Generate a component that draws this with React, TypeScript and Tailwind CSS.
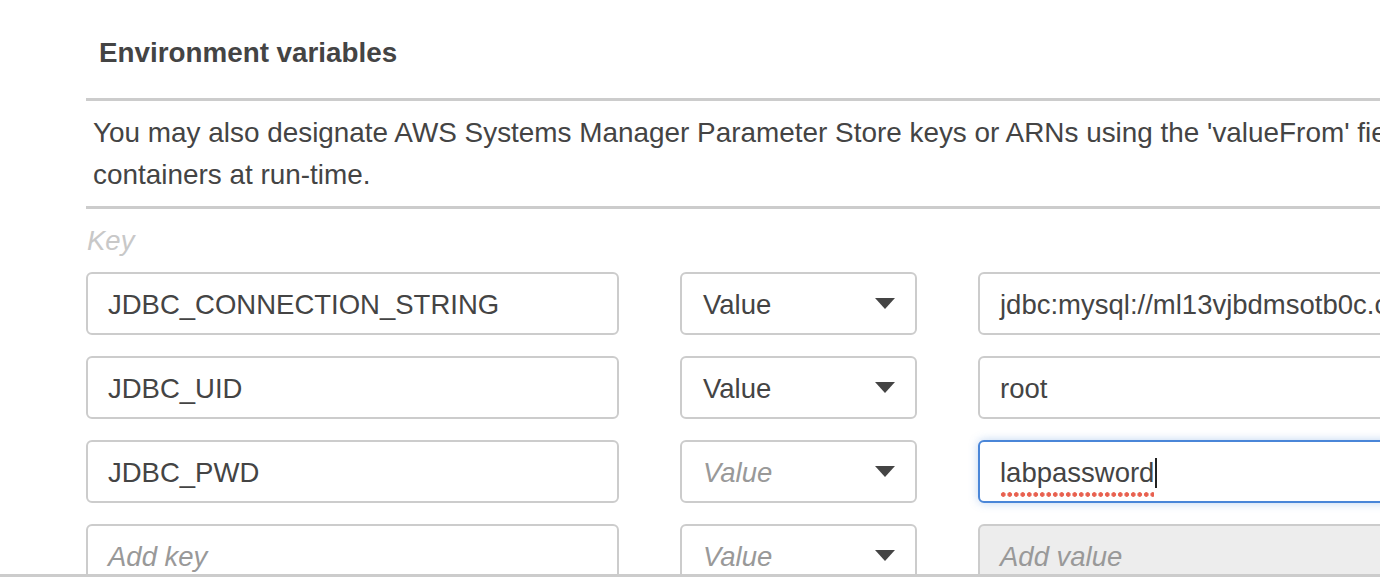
import React from "react";

const Caret = () => (
  <svg width="20" height="11" viewBox="0 0 20 11" className="shrink-0">
    <polygon points="0,0 20,0 10,11" fill="#444" />
  </svg>
);

type Row = {
  key: string;
  keyPlaceholder?: boolean;
  sel: string;
  selPlaceholder?: boolean;
  value: string;
  valuePlaceholder?: boolean;
  focused?: boolean;
};

const rows: Row[] = [
  { key: "JDBC_CONNECTION_STRING", sel: "Value", value: "jdbc:mysql://ml13vjbdmsotb0c.cxk2yqzmsyvk.us-west-2.rds.amazonaws.com" },
  { key: "JDBC_UID", sel: "Value", value: "root" },
  { key: "JDBC_PWD", sel: "Value", selPlaceholder: true, value: "labpassword", focused: true },
  { key: "Add key", keyPlaceholder: true, sel: "Value", selPlaceholder: true, value: "Add value", valuePlaceholder: true },
];

export default function App() {
  return (
    <div
      className="w-[1380px] h-[578px] overflow-hidden bg-white flex flex-col text-[#444]"
      style={{ fontFamily: '"Liberation Sans", Arial, Helvetica, sans-serif' }}
    >
      <div className="h-[574px] overflow-hidden pl-[86px] flex flex-col shrink-0">
        <h2 className="pt-[36px] pl-[13px] text-[27.8px] leading-[33px] font-bold text-[#444]">
          Environment variables
        </h2>
        <div className="mt-[29px] h-[3px] bg-[#cccccc] shrink-0" />
        <p className="pt-[11px] pb-[10px] pl-[7px] text-[27.9px] leading-[42px] whitespace-nowrap text-[#444]">
          You may also designate AWS Systems Manager Parameter Store keys or ARNs using the 'valueFrom' field to inject them into your
          <br />
          containers at run-time.
        </p>
        <div className="h-[3px] bg-[#cccccc] shrink-0" />
        <div className="mt-[16px] pl-[1px] text-[27.5px] leading-[32px] italic text-[#c8c8c8]">Key</div>
        <div className="mt-[15px] flex flex-col gap-[21px]">
          {rows.map((r, i) => (
            <div key={i} className="flex gap-[61px] shrink-0">
              <div className="w-[533px] h-[63px] shrink-0 rounded-[6px] border-2 border-[#cccccc] bg-white flex items-center pl-[20px] pt-[2px]">
                <span
                  className={
                    "text-[27.5px] whitespace-nowrap " +
                    (r.keyPlaceholder ? "italic text-[#999]" : "text-[#444]")
                  }
                >
                  {r.key}
                </span>
              </div>
              <div className="w-[237px] h-[63px] shrink-0 rounded-[6px] border-2 border-[#cccccc] bg-white flex items-center justify-between pl-[21px] pr-[20px]">
                <span
                  className={
                    "text-[27.5px] whitespace-nowrap pt-[2px] " +
                    (r.selPlaceholder ? "italic text-[#999]" : "text-[#444]")
                  }
                >
                  {r.sel}
                </span>
                <Caret />
              </div>
              {r.focused ? (
                <div className="w-[600px] h-[63px] shrink-0 rounded-[6px] border-2 border-[#4a86d8] bg-white flex items-center pl-[20px] pt-[2px] shadow-[0_0_10px_rgba(74,134,216,0.35)]">
                  <span className="relative text-[27.5px] whitespace-nowrap text-[#444]">
                    {r.value}
                    <span className="absolute left-0 right-0 bottom-[-5px] h-[7px] bg-[radial-gradient(circle,#e8604f_2px,transparent_2.6px)] bg-[length:6.5px_7px] bg-repeat-x" />
                  </span>
                  <span className="w-[2px] h-[30px] bg-[#222] ml-[1px]" />
                </div>
              ) : (
                <div
                  className={
                    "w-[600px] h-[63px] shrink-0 rounded-[6px] border-2 border-[#cccccc] flex items-center pl-[20px] pt-[2px] " +
                    (r.valuePlaceholder ? "bg-[#ededed]" : "bg-white")
                  }
                >
                  <span
                    className={
                      "text-[27.5px] whitespace-nowrap " +
                      (r.valuePlaceholder ? "italic text-[#999]" : "text-[#444]")
                    }
                  >
                    {r.value}
                  </span>
                </div>
              )}
            </div>
          ))}
        </div>
      </div>
      <div className="h-[4px] border-t-[3px] border-[#cccccc] bg-white shrink-0" />
    </div>
  );
}
